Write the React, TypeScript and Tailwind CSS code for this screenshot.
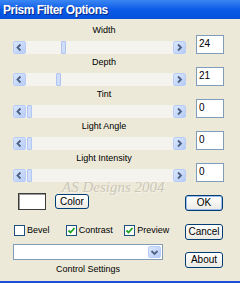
const params = [
  { label: 'Width', value: 24 },
  { label: 'Depth', value: 21 },
  { label: 'Tint', value: 0 },
  { label: 'Light Angle', value: 0 },
  { label: 'Light Intensity', value: 0 },
];

function Chevron({ dir }: { dir: 'left' | 'right' | 'down' }) {
  const d =
    dir === 'left' ? 'M6.5 2.5 L3.5 5.5 L6.5 8.5' : dir === 'right' ? 'M4 2.5 L7 5.5 L4 8.5' : 'M2.5 4 L5.5 7 L8.5 4';
  return (
    <svg width="11" height="11" viewBox="0 0 11 11">
      <path d={d} fill="none" stroke="#4d6185" strokeWidth="1.8" />
    </svg>
  );
}

function ScrollBtn({ dir }: { dir: 'left' | 'right' }) {
  return (
    <div className="w-[13px] h-[13px] flex items-center justify-center rounded-[2px] border border-[#b9cdf7] bg-linear-to-br from-[#dce7fd] to-[#b6cbf7]">
      <Chevron dir={dir} />
    </div>
  );
}

function Slider({ value }: { value: number }) {
  return (
    <div className="flex h-[13px] w-[173px] bg-[#f4f3ed]">
      <ScrollBtn dir="left" />
      <div className="shrink-0" style={{ width: value * 1.4 + 1 }} />
      <div className="w-[5px] h-[13px] rounded-[1px] border border-[#b0c5f2] bg-[#cfdcfa]" />
      <div className="flex-1" />
      <ScrollBtn dir="right" />
    </div>
  );
}

function XpButton({ label, isDefault, className }: { label: string; isDefault?: boolean; className: string }) {
  return (
    <div
      className={`flex items-center justify-center rounded-[3px] border border-[#003c74] bg-linear-to-b from-white to-[#ebeae3] text-[10px] leading-none text-black ${
        isDefault ? 'shadow-[inset_0_0_0_1px_#9dbcf0]' : ''
      } ${className}`}
    >
      {label}
    </div>
  );
}

function Check({ label, checked, width }: { label: string; checked: boolean; width: string }) {
  return (
    <div className={`flex items-center ${width}`}>
      <div className="w-[11px] h-[11px] border border-[#1c5180] bg-white flex items-center justify-center">
        {checked && (
          <svg width="9" height="9" viewBox="0 0 9 9">
            <path d="M1.5 4.5 L3.5 6.5 L7.5 2" fill="none" stroke="#21a121" strokeWidth="1.8" />
          </svg>
        )}
      </div>
      <span className="ml-[2px] text-[9px] leading-[11px] text-black">{label}</span>
    </div>
  );
}

export default function App() {
  return (
    <div className="relative w-[240px] h-[283px] overflow-hidden bg-[#ece9d8] border-b-2 border-[#1f4fd8] font-['Liberation_Sans',Arial,sans-serif]">
      {/* Title bar */}
      <div className="h-[19px] flex items-center pl-[3px] bg-linear-to-b from-[#3a86f4] via-[#0a5be6] to-[#0550dc]">
        <span className="text-white font-bold text-[12px] tracking-[-0.5px] leading-none [text-shadow:1px_1px_0_#0a2a8a]">
          Prism Filter Options
        </span>
      </div>

      {/* Sliders */}
      <div className="flex flex-col pt-[4px]">
        {params.map((p) => (
          <div key={p.label} className="flex h-[32px]">
            <div className="ml-[13px] w-[182px] flex flex-col">
              <div className="h-[14px] text-center text-[9px] leading-[14px] text-black">{p.label}</div>
              <div className="mt-[4px]">
                <Slider value={p.value} />
              </div>
            </div>
            <div className="ml-[1px] mt-[12px] w-[28px] h-[19px] border border-[#7f9db9] bg-white pl-[2px] pt-[2px] text-[10px] leading-[11px] text-black">
              {p.value}
            </div>
          </div>
        ))}
      </div>

      {/* Lower controls */}
      <div className="flex mt-[10px]">
        <div className="w-[172px] flex flex-col">
          <div className="flex items-start">
            <div className="ml-[18px] w-[28px] h-[17px] bg-white border border-[#3c3c3c] shadow-[inset_1px_1px_0_#9a9a9a]" />
            <XpButton label="Color" className="ml-[9px] mt-[1px] w-[34px] h-[15px]" />
          </div>

          <div className="flex items-center mt-[15px] ml-[14px]">
            <Check label="Bevel" checked={false} width="w-[52px]" />
            <Check label="Contrast" checked width="w-[59px]" />
            <Check label="Preview" checked width="w-[48px]" />
          </div>

          <div className="ml-[13px] mt-[8px] w-[150px] h-[16px] border border-[#7f9db9] bg-white flex justify-end p-[1px]">
            <div className="w-[13px] h-full flex items-center justify-center rounded-[2px] border border-[#b9cdf7] bg-linear-to-br from-[#dce7fd] to-[#b6cbf7]">
              <Chevron dir="down" />
            </div>
          </div>

          <div className="ml-[13px] w-[150px] mt-[3px] text-center text-[9px] leading-[12px] text-black">Control Settings</div>
        </div>

        <div className="ml-[13px] mt-[2px] flex flex-col w-[38px]">
          <XpButton label="OK" isDefault className="h-[16px]" />
          <XpButton label="Cancel" className="h-[16px] mt-[13px]" />
          <XpButton label="About" className="h-[16px] mt-[12px]" />
        </div>
      </div>

      {/* Watermark */}
      <div className="absolute left-[62px] top-[180px] font-['Liberation_Serif',serif] italic text-[15px] leading-none text-[#ccc7b7] [text-shadow:1px_1px_0_#f4f2ea]">
        AS Designs 2004
      </div>
    </div>
  );
}
